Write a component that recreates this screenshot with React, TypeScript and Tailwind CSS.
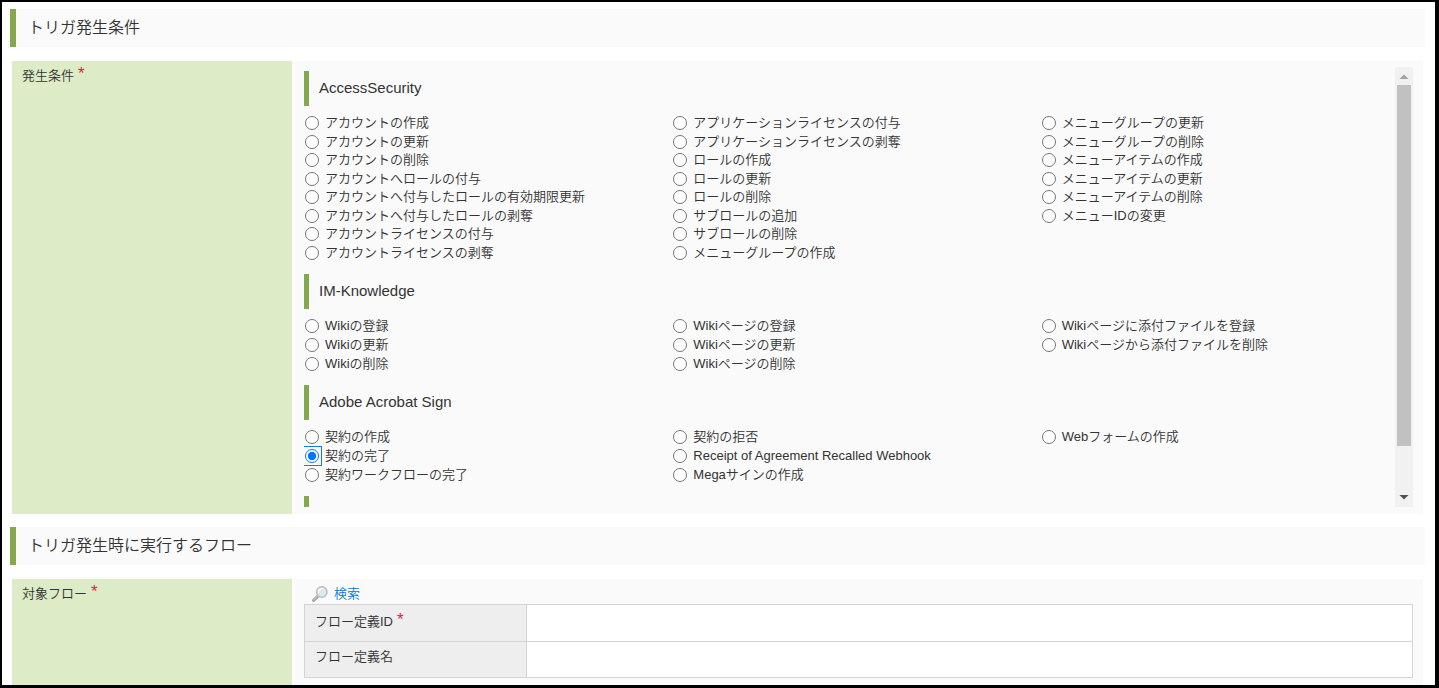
import type { ReactNode } from "react";
import clsx from "clsx";

type ConditionGroup = {
  name: string;
  rows: string;
  items: string[];
};

const GROUPS: ConditionGroup[] = [
  {
    name: "AccessSecurity",
    rows: "grid-rows-8 min-h-[148px]",
    items: [
      "アカウントの作成",
      "アカウントの更新",
      "アカウントの削除",
      "アカウントへロールの付与",
      "アカウントへ付与したロールの有効期限更新",
      "アカウントへ付与したロールの剥奪",
      "アカウントライセンスの付与",
      "アカウントライセンスの剥奪",
      "アプリケーションライセンスの付与",
      "アプリケーションライセンスの剥奪",
      "ロールの作成",
      "ロールの更新",
      "ロールの削除",
      "サブロールの追加",
      "サブロールの削除",
      "メニューグループの作成",
      "メニューグループの更新",
      "メニューグループの削除",
      "メニューアイテムの作成",
      "メニューアイテムの更新",
      "メニューアイテムの削除",
      "メニューIDの変更",
    ],
  },
  {
    name: "IM-Knowledge",
    rows: "grid-rows-3 min-h-14",
    items: [
      "Wikiの登録",
      "Wikiの更新",
      "Wikiの削除",
      "Wikiページの登録",
      "Wikiページの更新",
      "Wikiページの削除",
      "Wikiページに添付ファイルを登録",
      "Wikiページから添付ファイルを削除",
    ],
  },
  {
    name: "Adobe Acrobat Sign",
    rows: "grid-rows-3 min-h-14",
    items: [
      "契約の作成",
      "契約の完了",
      "契約ワークフローの完了",
      "契約の拒否",
      "Receipt of Agreement Recalled Webhook",
      "Megaサインの作成",
      "Webフォームの作成",
    ],
  },
];

const SELECTED = "契約の完了";

function SectionTitle({ children }: { children: ReactNode }) {
  return (
    <h2 className="flex h-[38px] items-center border-l-6 border-[#83a94c] bg-[#fafafa] pl-3 text-[16px] font-[350]">
      {children}
    </h2>
  );
}

function Required() {
  return (
    <sup className="top-0 ml-1 align-[1px] text-[17px] leading-none text-[#e6194b]">
      *
    </sup>
  );
}

function FormRow({
  label,
  children,
}: {
  label: string;
  children: ReactNode;
}) {
  return (
    <div className="mx-0.5 flex gap-0.5">
      <div className="w-[280px] shrink-0 bg-[#ddebc7] px-2.5 pt-1 leading-[18px]">
        {label}
        <Required />
      </div>
      <div className="min-w-0 flex-1 bg-[#fafafa] px-2.5 pt-1.5 pb-[7px]">
        {children}
      </div>
    </div>
  );
}

function GroupTitle({ children }: { children?: ReactNode }) {
  return (
    <legend className="flex h-[35px] w-full items-center border-l-5 border-[#83a94c] pl-2.5 text-[15px]">
      {children}
    </legend>
  );
}

function ConditionList({ group }: { group: ConditionGroup }) {
  return (
    <fieldset>
      <GroupTitle>{group.name}</GroupTitle>
      <div
        className={clsx(
          "-mr-3.5 mt-2 mb-3 grid grid-flow-col auto-cols-fr",
          group.rows,
        )}
      >
        {group.items.map((item) => (
          <label key={item} className="flex items-center whitespace-nowrap leading-[18px]">
            <input
              type="radio"
              name="condition"
              defaultChecked={item === SELECTED}
              className="mr-1.5 ml-px size-3.5 outline-offset-2 outline-[#0a7cff] checked:outline"
            />
            {item}
          </label>
        ))}
      </div>
    </fieldset>
  );
}

function ScrollBar() {
  return (
    <div className="flex w-[18px] shrink-0 flex-col items-center bg-[#f1f1f1]">
      <svg viewBox="0 0 18 18" className="size-[18px] fill-[#a3a3a3]">
        <path d="M9 7.5 13.5 12h-9z" />
      </svg>
      <div className="h-[361px] w-3.5 bg-[#c1c1c1]" />
      <svg viewBox="0 0 18 18" className="mt-auto size-[18px] fill-[#505050]">
        <path d="M4.5 6h9L9 10.5z" />
      </svg>
    </div>
  );
}

function SearchIcon() {
  return (
    <svg viewBox="0 0 16 16" className="size-4" fill="none">
      <path d="M1.6 14.4 5.4 10.6" stroke="#a3a3a3" strokeWidth={3} strokeLinecap="round" />
      <path d="M1.6 13.8 5.2 10.2" stroke="#d2d2d2" strokeWidth={1} strokeLinecap="round" />
      <circle cx="9.8" cy="6" r="5.2" fill="#dce8f2" stroke="#bdbdbd" strokeWidth={1.5} />
      <path d="M6.6 6a3.4 3.4 0 0 1 3.4-3.4" stroke="#fff" strokeWidth={1.3} strokeLinecap="round" />
    </svg>
  );
}

export default function App() {
  return (
    <main className="h-screen overflow-hidden border-t-2 border-r-4 border-b-3 border-l-2 border-black bg-white pt-[7px] pr-2.5 pl-2 font-['Liberation_Sans','Noto_Sans_CJK_JP',sans-serif] text-[13px] font-[350] text-[#333]">
      <SectionTitle>トリガ発生条件</SectionTitle>
      <div className="mt-3.5 mb-[13px]">
        <FormRow label="発生条件">
          <div className="flex h-[440px]">
            <div className="min-w-0 flex-1 overflow-hidden pt-1">
              {GROUPS.map((group) => (
                <ConditionList key={group.name} group={group} />
              ))}
              <fieldset>
                <GroupTitle />
              </fieldset>
            </div>
            <ScrollBar />
          </div>
        </FormRow>
      </div>

      <SectionTitle>トリガ発生時に実行するフロー</SectionTitle>
      <div className="mt-3.5">
        <FormRow label="対象フロー">
          <button
            type="button"
            className="mb-px ml-2 flex items-center gap-1.5 leading-[18px] text-[#0a78d6]"
          >
            <SearchIcon />
            検索
          </button>
          <table className="mb-4 w-full border-collapse bg-white">
            <tbody>
              <tr className="h-[37px]">
                <th
                  scope="row"
                  className="w-[222px] border border-[#d4d4d4] bg-[#eee] px-2.5 pb-1 text-left font-[350]"
                >
                  フロー定義ID
                  <Required />
                </th>
                <td className="border border-[#d4d4d4]" />
              </tr>
              <tr className="h-9">
                <th
                  scope="row"
                  className="border border-[#d4d4d4] bg-[#eee] px-2.5 pb-1.5 text-left font-[350]"
                >
                  フロー定義名
                </th>
                <td className="border border-[#d4d4d4]" />
              </tr>
            </tbody>
          </table>
        </FormRow>
      </div>
    </main>
  );
}
